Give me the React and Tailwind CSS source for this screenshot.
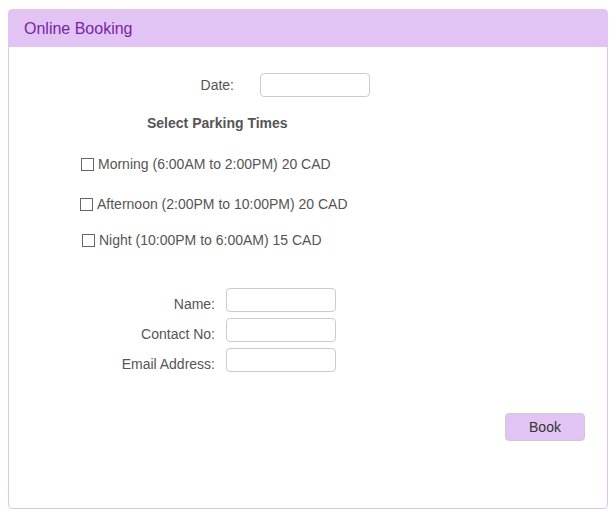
import React from 'react';

const slots = [
    { label: 'Morning (6:00AM to 2:00PM) 20 CAD', pad: 'pl-[72px]', mt: 'mt-[25px]' },
    { label: 'Afternoon (2:00PM to 10:00PM) 20 CAD', pad: 'pl-[71px]', mt: 'mt-[24px]' },
    { label: 'Night (10:00PM to 6:00AM) 15 CAD', pad: 'pl-[73px]', mt: 'mt-[20px]' },
];

const fields = ['Name:', 'Contact No:', 'Email Address:'];

const App = () => {
    return (
        <div className="w-[616px] h-[516px] bg-white pt-[9px] pl-[8px] font-['Liberation_Sans',Arial,sans-serif] text-[14px] text-[#555]">
            <div className="w-[600px] h-[500px] border border-[#e1c4f3] rounded-[4px] flex flex-col">
                {/* Header */}
                <div className="h-[37px] bg-[#e1c4f3] flex items-center px-[15px] text-[16px] text-[#7b1fa2]">
                    Online Booking
                </div>

                {/* Date */}
                <div className="mt-[26px] flex items-center">
                    <label className="w-[225px] text-right leading-4">Date:</label>
                    <input type="text" className="ml-[26px] w-[110px] h-[24px] border border-[#ccc] rounded-[4px] outline-none" />
                </div>

                {/* Parking times */}
                <div className="mt-[18px] pl-[138px] font-bold leading-4">Select Parking Times</div>
                {slots.map((s) => (
                    <label key={s.label} className={`${s.mt} ${s.pad} flex items-center leading-4`}>
                        <input type="checkbox" className="appearance-none w-[13px] h-[13px] border border-[#666] bg-white mr-[4px]" />
                        <span>{s.label}</span>
                    </label>
                ))}

                {/* Contact details */}
                <div className="mt-[40px] flex flex-col gap-[6px]">
                    {fields.map((f) => (
                        <div key={f} className="flex items-end">
                            <label className="w-[206px] text-right leading-4">{f}</label>
                            <input type="text" className="ml-[11px] w-[110px] h-[24px] border border-[#ccc] rounded-[4px] outline-none" />
                        </div>
                    ))}
                </div>

                <div className="mt-[41px] flex justify-end pr-[22px]">
                    <button className="w-[80px] h-[28px] bg-[#e1c4f3] border border-[#ccc] rounded-[4px] text-[14px] text-[#333]">
                        Book
                    </button>
                </div>
            </div>
        </div>
    );
};

export default App;
